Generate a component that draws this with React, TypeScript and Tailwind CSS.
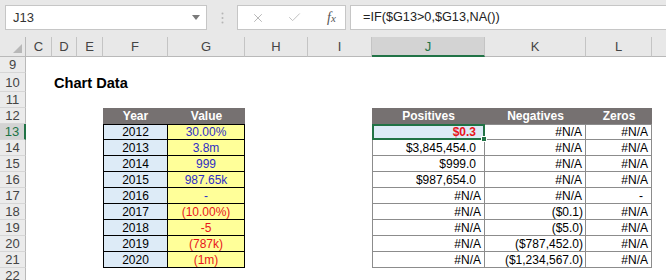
import { Check, X } from "lucide-react";

type DataRow = {
  year: string;
  value: string;
  red: boolean;
  pos: string;
  neg: string;
  zero: string;
};

// M is only a sliver at the right edge, its letter falls outside the window
const COLUMNS = ["C", "D", "E", "F", "G", "H", "I", "J", "K", "L", ""];

const ROWS: DataRow[] = [
  { year: "2012", value: "30.00%", red: false, pos: "$0.3", neg: "#N/A", zero: "#N/A" },
  { year: "2013", value: "3.8m", red: false, pos: "$3,845,454.0", neg: "#N/A", zero: "#N/A" },
  { year: "2014", value: "999", red: false, pos: "$999.0", neg: "#N/A", zero: "#N/A" },
  { year: "2015", value: "987.65k", red: false, pos: "$987,654.0", neg: "#N/A", zero: "#N/A" },
  { year: "2016", value: "-", red: false, pos: "#N/A", neg: "#N/A", zero: "-" },
  { year: "2017", value: "(10.00%)", red: true, pos: "#N/A", neg: "($0.1)", zero: "#N/A" },
  { year: "2018", value: "-5", red: true, pos: "#N/A", neg: "($5.0)", zero: "#N/A" },
  { year: "2019", value: "(787k)", red: true, pos: "#N/A", neg: "($787,452.0)", zero: "#N/A" },
  { year: "2020", value: "(1m)", red: true, pos: "#N/A", neg: "($1,234,567.0)", zero: "#N/A" },
];

// right padding: numbers keep room for the ")" of the negative format
function padFor(text: string) {
  if (text === "#N/A") return "pr-[3px]";
  if (text.startsWith("(")) return "pr-[2px]";
  return "pr-[8px]";
}

function RowHeader({ n, selected }: { n: number; selected?: boolean }) {
  return (
    <div
      className={`flex items-center justify-center border-b border-[#d6d6d6] text-[13px] leading-none ${
        selected
          ? "border-r-2 border-r-[#217346] bg-[#d3d3d3] text-[#217346]"
          : "border-r border-r-[#b9b9b9] bg-[#ebebeb] text-[#444]"
      }`}
    >
      {n}
    </div>
  );
}

function Empty() {
  return <div />;
}

export default function App() {
  return (
    <div className="h-[280px] w-[666px] overflow-hidden bg-white font-['Liberation_Sans',Arial,sans-serif] text-[12px] text-black">
      {/* formula bar */}
      <div className="flex h-[37px] items-start bg-[#e8e8e8] pt-[5px]">
        <div className="ml-[5px] flex h-[25px] w-[202px] items-center justify-between border border-[#c6c6c6] bg-white pl-[7px] pr-[6px]">
          <span className="text-[13px] text-[#333]">J13</span>
          <svg width="8" height="5" viewBox="0 0 8 5">
            <path d="M0 0 L8 0 L4 5 Z" fill="#7a7a7a" />
          </svg>
        </div>
        <div className="flex h-[25px] w-[30px] items-center justify-center">
          <svg width="3" height="12" viewBox="0 0 3 12">
            <circle cx="1.5" cy="1.5" r="1" fill="#b5b5b5" />
            <circle cx="1.5" cy="6" r="1" fill="#b5b5b5" />
            <circle cx="1.5" cy="10.5" r="1" fill="#b5b5b5" />
          </svg>
        </div>
        <div className="flex h-[25px] w-[109px] items-center border border-[#c6c6c6] bg-white">
          <X size={14} strokeWidth={1.4} className="ml-[13px] text-[#a8a8a8]" />
          <Check size={15} strokeWidth={1.4} className="ml-[22px] text-[#b8b8b8]" />
          <span className="ml-[25px] font-['Liberation_Serif',serif] text-[14px] italic text-[#555]">
            f<span className="text-[11px]">x</span>
          </span>
        </div>
        <div className="ml-[4px] flex h-[25px] flex-1 items-center border border-r-0 border-[#c6c6c6] bg-white pl-[12px] text-[12.7px] text-[#222]">
          =IF($G13&gt;0,$G13,NA())
        </div>
      </div>

      {/* sheet */}
      <div className="grid grid-cols-[26px_26px_25px_26px_65px_77px_63px_64px_113px_101px_66px_64px] grid-rows-[20px_16px_19px_16px_16px_repeat(9,16px)_16px]">
        {/* column headings */}
        <div className="relative border-b border-r border-[#b9b9b9] bg-[#e8e8e8]">
          <svg className="absolute bottom-[3px] right-[3px]" width="9" height="9" viewBox="0 0 9 9">
            <path d="M9 0 L9 9 L0 9 Z" fill="#b8b8b8" />
          </svg>
        </div>
        {COLUMNS.map((c, i) => (
          <div
            key={`col${i}`}
            className={`flex items-center justify-center text-[13px] leading-none ${
              c === "J"
                ? "border-b-2 border-r border-b-[#217346] border-r-[#c4c4c4] bg-[#d3d3d3] text-[#217346]"
                : "border-b border-r border-b-[#b9b9b9] border-r-[#c4c4c4] bg-[#e8e8e8] text-[#444]"
            }`}
          >
            {c}
          </div>
        ))}

        {/* row 9 */}
        <RowHeader n={9} />
        {COLUMNS.map((_, i) => (
          <Empty key={`9-${i}`} />
        ))}

        {/* row 10 */}
        <RowHeader n={10} />
        <Empty />
        <div className="flex items-center whitespace-nowrap pl-[2px] pt-[2px] text-[14.6px] font-bold">Chart Data</div>
        {COLUMNS.slice(2).map((_, i) => (
          <Empty key={`10-${i}`} />
        ))}

        {/* row 11 */}
        <RowHeader n={11} />
        {COLUMNS.map((_, i) => (
          <Empty key={`11-${i}`} />
        ))}

        {/* row 12: table headings */}
        <RowHeader n={12} />
        <Empty />
        <Empty />
        <Empty />
        <div className="flex items-center justify-center bg-[#767171] font-bold text-white">Year</div>
        <div className="flex items-center justify-center bg-[#767171] font-bold text-white">Value</div>
        <Empty />
        <Empty />
        <div className="flex items-center justify-center bg-[#767171] font-bold text-white">Positives</div>
        <div className="flex items-center justify-center bg-[#767171] font-bold text-white">Negatives</div>
        <div className="flex items-center justify-center bg-[#767171] font-bold text-white">Zeros</div>
        <Empty />

        {/* rows 13 to 21 */}
        {ROWS.map((row, i) => {
          const first = i === 0;
          const top = first ? "border-t" : "";
          return [
            <RowHeader key={`h${i}`} n={13 + i} selected={first} />,
            <Empty key={`c${i}`} />,
            <Empty key={`d${i}`} />,
            <Empty key={`e${i}`} />,
            <div
              key={`f${i}`}
              className={`flex items-center justify-center border-b border-l border-r border-black bg-[#ddebf7] ${top}`}
            >
              {row.year}
            </div>,
            <div
              key={`g${i}`}
              className={`flex items-center justify-center border-b border-r border-black bg-[#ffff99] ${top} ${
                row.red ? "text-[#e8141b]" : "text-[#2e2ec4]"
              }`}
            >
              {row.value}
            </div>,
            <Empty key={`hh${i}`} />,
            <Empty key={`i${i}`} />,
            <div
              key={`j${i}`}
              className={`relative flex items-center justify-end border-b border-l border-r border-[#8c8c8c] ${padFor(row.pos)} ${
                first ? "border-t bg-[#ddebf7] font-bold text-[#e8141b]" : ""
              }`}
            >
              {row.pos}
              {first && (
                <div className="absolute inset-[-1px] z-10 border-2 border-[#217346]">
                  <div className="absolute bottom-[-4px] right-[-4px] h-[6px] w-[6px] border border-white bg-[#217346]" />
                </div>
              )}
            </div>,
            <div
              key={`k${i}`}
              className={`flex items-center justify-end border-b border-r border-[#8c8c8c] ${padFor(row.neg)} ${top}`}
            >
              {row.neg}
            </div>,
            <div
              key={`l${i}`}
              className={`flex items-center justify-end border-b border-r border-[#8c8c8c] ${
                row.zero === "-" ? "pr-[8px]" : padFor(row.zero)
              } ${top}`}
            >
              {row.zero}
            </div>,
            <Empty key={`m${i}`} />,
          ];
        })}

        {/* row 22 */}
        <RowHeader n={22} />
        {COLUMNS.map((_, i) => (
          <Empty key={`22-${i}`} />
        ))}
      </div>
    </div>
  );
}
